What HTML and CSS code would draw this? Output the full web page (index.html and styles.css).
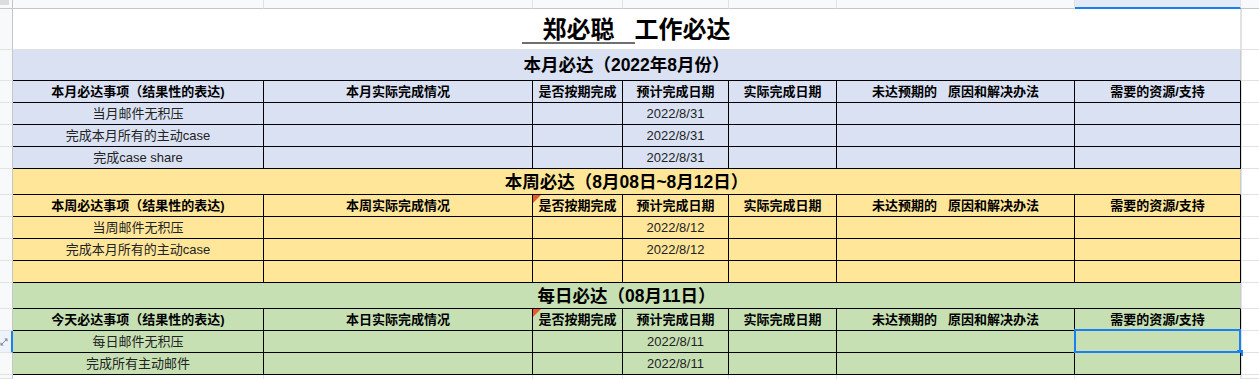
FILE: index.html
```html
<!DOCTYPE html>
<html lang="zh-CN">
<head>
<meta charset="utf-8">
<title>郑必聪 工作必达</title>
<link rel="stylesheet" href="styles.css">
</head>
<body>
<div class="sheet">
  <div class="row colhead">
    <div class="rh corner"><span class="corner-block"></span></div>
    <div class="ch"></div>
    <div class="ch"></div>
    <div class="ch"></div>
    <div class="ch"></div>
    <div class="ch"></div>
    <div class="ch"></div>
    <div class="ch ch-sel"></div>
    <div class="ch ch-fill"></div>
  </div>

  <div class="row title-row">
    <div class="rh"></div>
    <div class="title"><span class="title-u">   郑必聪   </span>工作必达</div>
    <div class="fill"></div>
  </div>

  <div class="row month">
    <div class="rh"></div>
    <div class="sec">本月必达（2022年8月份）</div>
    <div class="fill"></div>
  </div>
  <div class="row month head">
    <div class="rh"></div>
    <div class="c">本月必达事项（结果性的表达)</div>
    <div class="c">本月实际完成情况</div>
    <div class="c">是否按期完成</div>
    <div class="c">预计完成日期</div>
    <div class="c">实际完成日期</div>
    <div class="c pre">未达预期的   原因和解决办法</div>
    <div class="c">需要的资源/支持</div>
    <div class="fill"></div>
  </div>
  <div class="row month">
    <div class="rh"></div>
    <div class="c">当月邮件无积压</div>
    <div class="c"></div>
    <div class="c"></div>
    <div class="c">2022/8/31</div>
    <div class="c"></div>
    <div class="c"></div>
    <div class="c"></div>
    <div class="fill"></div>
  </div>
  <div class="row month">
    <div class="rh"></div>
    <div class="c">完成本月所有的主动case</div>
    <div class="c"></div>
    <div class="c"></div>
    <div class="c">2022/8/31</div>
    <div class="c"></div>
    <div class="c"></div>
    <div class="c"></div>
    <div class="fill"></div>
  </div>
  <div class="row month">
    <div class="rh"></div>
    <div class="c">完成case share</div>
    <div class="c"></div>
    <div class="c"></div>
    <div class="c">2022/8/31</div>
    <div class="c"></div>
    <div class="c"></div>
    <div class="c"></div>
    <div class="fill"></div>
  </div>

  <div class="row week">
    <div class="rh"></div>
    <div class="sec">本周必达（8月08日~8月12日）</div>
    <div class="fill"></div>
  </div>
  <div class="row week head">
    <div class="rh"></div>
    <div class="c">本周必达事项（结果性的表达)</div>
    <div class="c">本周实际完成情况</div>
    <div class="c noted"><span class="note"></span>是否按期完成</div>
    <div class="c">预计完成日期</div>
    <div class="c">实际完成日期</div>
    <div class="c pre">未达预期的   原因和解决办法</div>
    <div class="c">需要的资源/支持</div>
    <div class="fill"></div>
  </div>
  <div class="row week">
    <div class="rh"></div>
    <div class="c">当周邮件无积压</div>
    <div class="c"></div>
    <div class="c"></div>
    <div class="c">2022/8/12</div>
    <div class="c"></div>
    <div class="c"></div>
    <div class="c"></div>
    <div class="fill"></div>
  </div>
  <div class="row week">
    <div class="rh"></div>
    <div class="c">完成本月所有的主动case</div>
    <div class="c"></div>
    <div class="c"></div>
    <div class="c">2022/8/12</div>
    <div class="c"></div>
    <div class="c"></div>
    <div class="c"></div>
    <div class="fill"></div>
  </div>
  <div class="row week">
    <div class="rh"></div>
    <div class="c"></div>
    <div class="c"></div>
    <div class="c"></div>
    <div class="c"></div>
    <div class="c"></div>
    <div class="c"></div>
    <div class="c"></div>
    <div class="fill"></div>
  </div>

  <div class="row day">
    <div class="rh"></div>
    <div class="sec">每日必达（08月11日）</div>
    <div class="fill"></div>
  </div>
  <div class="row day head">
    <div class="rh"></div>
    <div class="c">今天必达事项（结果性的表达)</div>
    <div class="c">本日实际完成情况</div>
    <div class="c noted"><span class="note"></span>是否按期完成</div>
    <div class="c">预计完成日期</div>
    <div class="c">实际完成日期</div>
    <div class="c pre">未达预期的   原因和解决办法</div>
    <div class="c">需要的资源/支持</div>
    <div class="fill"></div>
  </div>
  <div class="row day">
    <div class="rh rh-sel">
      <svg class="resize" width="8" height="8" viewBox="0 0 8 8" aria-hidden="true">
        <path d="M1.2 6.8 L6.8 1.2" stroke="#80868b" stroke-width="1" fill="none"/>
        <path d="M0.5 4.3 L0.5 7.5 L3.7 7.5 Z" fill="#80868b"/>
        <path d="M7.5 3.7 L7.5 0.5 L4.3 0.5 Z" fill="#80868b"/>
      </svg>
    </div>
    <div class="c">每日邮件无积压</div>
    <div class="c"></div>
    <div class="c"></div>
    <div class="c">2022/8/11</div>
    <div class="c"></div>
    <div class="c"></div>
    <div class="c selected"><span class="sel-box"></span><span class="sel-handle"></span></div>
    <div class="fill"></div>
  </div>
  <div class="row day">
    <div class="rh"></div>
    <div class="c">完成所有主动邮件</div>
    <div class="c"></div>
    <div class="c"></div>
    <div class="c">2022/8/11</div>
    <div class="c"></div>
    <div class="c"></div>
    <div class="c"></div>
    <div class="fill"></div>
  </div>

  <div class="row tail">
    <div class="rh"></div>
    <div class="blank"></div>
    <div class="blank"></div>
    <div class="blank"></div>
    <div class="blank"></div>
    <div class="blank"></div>
    <div class="blank"></div>
    <div class="blank"></div>
    <div class="fill"></div>
  </div>
</div>
</body>
</html>
```

FILE: styles.css
```css
* { box-sizing: border-box; }

html, body {
  margin: 0;
  padding: 0;
  background: #ffffff;
}

body {
  width: 1259px;
  height: 379px;
  overflow: hidden;
  font-family: "Liberation Sans", "Noto Sans CJK SC", sans-serif;
  color: #222222;
}

.sheet {
  display: grid;
  grid-template-columns: 13px 251px 269px 90px 106px 108px 238px 166px 1fr;
  grid-template-rows: 9px 41px 31px 22px 22px 22px 22px 26px 22px 22px 22px 22px 26px 22px 22px 22px 1fr;
  width: 1259px;
  height: 379px;
}

.row { display: contents; }

/* column header strip */
.ch {
  background: #f8f9fa;
  border-right: 1px solid #e1e3e1;
  border-bottom: 1px solid #c4c7c5;
}
.ch-sel {
  background: #e3ebf8;
  border-bottom: 2px solid #1a7ff0;
}
.ch-fill { border-right: none; }

/* row header column */
.rh {
  background: #f8f9fa;
  border-right: 1px solid #c4c7c5;
  border-bottom: 1px solid #e1e3e1;
  position: relative;
}
.corner {
  border-bottom: 1px solid #c4c7c5;
}
.corner-block {
  position: absolute;
  left: 0;
  top: 0;
  width: 9px;
  height: 5px;
  background: #dadce0;
}
.rh-sel {
  background: #eef3fb;
  border-right: 2px solid #1a7ff0;
}
.resize {
  position: absolute;
  left: 0;
  top: 7px;
}

/* right-side empty grid */
.fill {
  background: #ffffff;
  border-left: 1px solid #e1e3e1;
  border-bottom: 1px solid #e1e3e1;
}

/* title */
.title {
  grid-column: span 7;
  background: #ffffff;
  border-right: 1px solid #e1e3e1;
  border-bottom: 1px solid #e1e3e1;
  display: flex;
  align-items: center;
  justify-content: center;
  font-size: 24px;
  font-weight: 700;
  color: #000000;
  white-space: pre;
  line-height: 24px;
  padding-top: 1px;
}
.title-u {
  display: inline-block;
  line-height: 24px;
  border-bottom: 2px solid #6f6f6f;
  padding-bottom: 0;
  margin-bottom: -2px;
}

/* section headers */
.sec {
  grid-column: span 7;
  display: flex;
  align-items: center;
  justify-content: center;
  font-size: 17.5px;
  font-weight: 700;
  color: #000000;
  border-right: 1px solid #c9ccce;
  border-bottom: 1px solid #000000;
  line-height: 20px;
}

/* data cells */
.c {
  display: flex;
  align-items: center;
  justify-content: center;
  font-size: 13px;
  line-height: 16px;
  border-right: 1px solid #000000;
  border-bottom: 1px solid #000000;
  white-space: nowrap;
  position: relative;
}
.head .c {
  font-weight: 700;
  color: #000000;
}
.pre { white-space: pre; }

.month .sec, .month .c { background: #d9e1f2; }
.week .sec, .week .c { background: #ffe699; }
.day .sec, .day .c { background: #c6e0b4; }

.blank {
  background: #ffffff;
  border-right: 1px solid #e1e3e1;
}

/* comment indicator */
.note {
  position: absolute;
  left: 0;
  top: 0;
  width: 0;
  height: 0;
  border-top: 8px solid #ea5a2f;
  border-right: 8px solid transparent;
}

/* selection */
.sel-box {
  position: absolute;
  left: -1px;
  top: -2px;
  right: -1px;
  bottom: -1px;
  border: 2px solid #1a7ff0;
}
.sel-handle {
  position: absolute;
  right: -3px;
  bottom: -4px;
  width: 6px;
  height: 6px;
  background: #1a7ff0;
}
```
